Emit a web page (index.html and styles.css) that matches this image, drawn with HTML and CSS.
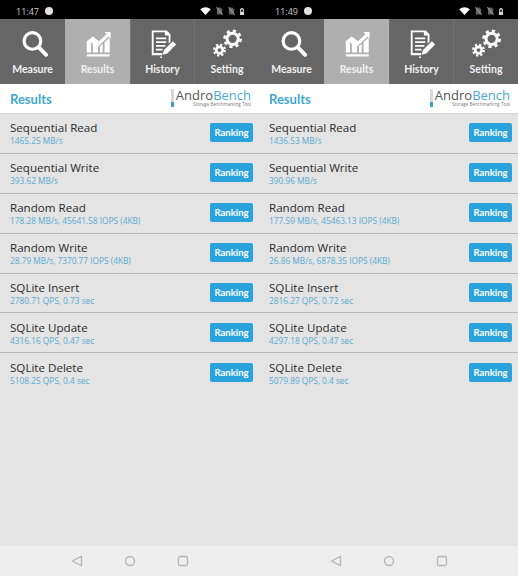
FILE: index.html
```html
<!DOCTYPE html>
<html lang="en">
<head>
<meta charset="utf-8">
<title>AndroBench Results</title>
<link rel="stylesheet" href="styles.css">
</head>
<body>
<svg class="defs" width="0" height="0" aria-hidden="true">
  <defs>
    <symbol id="i-measure" viewBox="0 0 32 32">
      <circle cx="15.400" cy="12.700" r="8.900" fill="none" stroke="#fff" stroke-width="3.400"/>
      <path d="M22.500 19.800L30 27.500" stroke="#fff" stroke-width="4.200" stroke-linecap="round"/>
    </symbol>
    <symbol id="i-results" viewBox="0 0 32 32">
      <path d="M4 13l6.500-5 6.500 5 8-7.500-2-2.200h6.500v6.700l-2-2-12.500 11.500-6.500-5.500-4.500 3.500z" fill="#fff"/>
      <path d="M4 17.500l4.500-3.500v11h-4.500zM10.500 12.800l5.500 4.500v7.700h-5.500zM18 18.500l3-2.700v9.200h-3zM23 14l5.500-5v16h-5.500zM4 27h24.500v2.200h-24.500z" fill="#fff"/>
    </symbol>
    <symbol id="i-history" viewBox="0 0 32 32">
      <path d="M4 1.500h16l4 4v8l-2 2v-8.500h-4v-3.500h-12v22h9v2.500h-11z" fill="#fff"/>
      <path d="M8.500 9h11v2h-11zM8.500 13h11v2h-11zM8.500 17h10v2h-10zM8.500 21h7v2h-7z" fill="#fff"/>
      <path d="M26.500 13l3.500 3.500-9.500 9.500-5 1.500 1.500-5z" fill="#fff"/>
      <circle cx="14" cy="30" r="1" fill="#fff"/>
    </symbol>
    <symbol id="i-setting" viewBox="0 0 32 32">
      <g fill="none" stroke="#fff">
        <circle cx="22" cy="10.500" r="6" stroke-width="3.200"/>
        <circle cx="22" cy="10.500" r="8.600" stroke-width="2.800" stroke-dasharray="3.400 3.350"/>
        <circle cx="8" cy="22.500" r="3.500" stroke-width="2.800"/>
        <circle cx="8" cy="22.500" r="5.800" stroke-width="2.200" stroke-dasharray="2.400 2.150"/>
      </g>
    </symbol>
    <symbol id="i-wifi" viewBox="0 0 12 9">
      <path d="M0 2.500Q6-2 12 2.500L6 9z" fill="#fff"/>
    </symbol>
    <symbol id="i-sim" viewBox="0 0 8 9">
      <path d="M1 .5h4l2 2v6h-6z" fill="#666"/>
      <path d="M0 0l8 9" stroke="#bbb" stroke-width=".8"/>
    </symbol>
    <symbol id="i-batt" viewBox="0 0 5 9">
      <path d="M1.500 0h2v1h1.500v8h-5v-8h1.500z" fill="#ddd"/>
      <path d="M1 2h3v3h-3z" fill="#333"/>
    </symbol>
  </defs>
</svg>

<main class="screens">
  <section class="phone">
    <header class="status">
      <span class="clock">11:47</span>
      <span class="dot"></span>
      <span class="status-icons">
        <svg class="wifi"><use href="#i-wifi"/></svg>
        <svg class="sim"><use href="#i-sim"/></svg>
        <svg class="sim"><use href="#i-sim"/></svg>
        <svg class="batt"><use href="#i-batt"/></svg>
      </span>
    </header>
    <nav class="tabs">
      <a class="tab"><svg class="tab-icon"><use href="#i-measure"/></svg><span>Measure</span></a>
      <a class="tab active"><svg class="tab-icon"><use href="#i-results"/></svg><span>Results</span></a>
      <a class="tab"><svg class="tab-icon"><use href="#i-history"/></svg><span>History</span></a>
      <a class="tab"><svg class="tab-icon"><use href="#i-setting"/></svg><span>Setting</span></a>
    </nav>
    <div class="title-bar">
      <h1>Results</h1>
      <div class="logo">
        <span class="logo-bar"></span>
        <div class="logo-text">
          <div class="logo-name">Andro<b>Bench</b></div>
          <div class="logo-sub">Storage Benchmarking Tool</div>
        </div>
      </div>
    </div>
    <ul class="results">
      <li class="row"><div class="info"><h2>Sequential Read</h2><p>1465.25 MB/s</p></div><button class="rank">Ranking</button></li>
      <li class="row"><div class="info"><h2>Sequential Write</h2><p>393.62 MB/s</p></div><button class="rank">Ranking</button></li>
      <li class="row"><div class="info"><h2>Random Read</h2><p>178.28 MB/s, 45641.58 IOPS (4KB)</p></div><button class="rank">Ranking</button></li>
      <li class="row"><div class="info"><h2>Random Write</h2><p>28.79 MB/s, 7370.77 IOPS (4KB)</p></div><button class="rank">Ranking</button></li>
      <li class="row"><div class="info"><h2>SQLite Insert</h2><p>2780.71 QPS, 0.73 sec</p></div><button class="rank">Ranking</button></li>
      <li class="row"><div class="info"><h2>SQLite Update</h2><p>4316.16 QPS, 0.47 sec</p></div><button class="rank">Ranking</button></li>
      <li class="row"><div class="info"><h2>SQLite Delete</h2><p>5108.25 QPS, 0.4 sec</p></div><button class="rank">Ranking</button></li>
    </ul>
    <footer class="softkeys">
      <svg class="key" viewBox="0 0 12 12"><path d="M10.500 1.200v9.600L1.500 6z" fill="none" stroke="#b5b5b5" stroke-width="1.300" stroke-linejoin="round"/></svg>
      <svg class="key" viewBox="0 0 12 12"><circle cx="6" cy="6" r="4.500" fill="none" stroke="#b5b5b5" stroke-width="1.300"/></svg>
      <svg class="key" viewBox="0 0 12 12"><rect x="1.500" y="1.500" width="9" height="9" rx="1.500" fill="none" stroke="#b5b5b5" stroke-width="1.300"/></svg>
    </footer>
  </section>

  <section class="phone">
    <header class="status">
      <span class="clock">11:49</span>
      <span class="dot"></span>
      <span class="status-icons">
        <svg class="wifi"><use href="#i-wifi"/></svg>
        <svg class="sim"><use href="#i-sim"/></svg>
        <svg class="sim"><use href="#i-sim"/></svg>
        <svg class="batt"><use href="#i-batt"/></svg>
      </span>
    </header>
    <nav class="tabs">
      <a class="tab"><svg class="tab-icon"><use href="#i-measure"/></svg><span>Measure</span></a>
      <a class="tab active"><svg class="tab-icon"><use href="#i-results"/></svg><span>Results</span></a>
      <a class="tab"><svg class="tab-icon"><use href="#i-history"/></svg><span>History</span></a>
      <a class="tab"><svg class="tab-icon"><use href="#i-setting"/></svg><span>Setting</span></a>
    </nav>
    <div class="title-bar">
      <h1>Results</h1>
      <div class="logo">
        <span class="logo-bar"></span>
        <div class="logo-text">
          <div class="logo-name">Andro<b>Bench</b></div>
          <div class="logo-sub">Storage Benchmarking Tool</div>
        </div>
      </div>
    </div>
    <ul class="results">
      <li class="row"><div class="info"><h2>Sequential Read</h2><p>1436.53 MB/s</p></div><button class="rank">Ranking</button></li>
      <li class="row"><div class="info"><h2>Sequential Write</h2><p>390.96 MB/s</p></div><button class="rank">Ranking</button></li>
      <li class="row"><div class="info"><h2>Random Read</h2><p>177.59 MB/s, 45463.13 IOPS (4KB)</p></div><button class="rank">Ranking</button></li>
      <li class="row"><div class="info"><h2>Random Write</h2><p>26.86 MB/s, 6878.35 IOPS (4KB)</p></div><button class="rank">Ranking</button></li>
      <li class="row"><div class="info"><h2>SQLite Insert</h2><p>2816.27 QPS, 0.72 sec</p></div><button class="rank">Ranking</button></li>
      <li class="row"><div class="info"><h2>SQLite Update</h2><p>4297.18 QPS, 0.47 sec</p></div><button class="rank">Ranking</button></li>
      <li class="row"><div class="info"><h2>SQLite Delete</h2><p>5079.89 QPS, 0.4 sec</p></div><button class="rank">Ranking</button></li>
    </ul>
    <footer class="softkeys">
      <svg class="key" viewBox="0 0 12 12"><path d="M10.500 1.200v9.600L1.500 6z" fill="none" stroke="#b5b5b5" stroke-width="1.300" stroke-linejoin="round"/></svg>
      <svg class="key" viewBox="0 0 12 12"><circle cx="6" cy="6" r="4.500" fill="none" stroke="#b5b5b5" stroke-width="1.300"/></svg>
      <svg class="key" viewBox="0 0 12 12"><rect x="1.500" y="1.500" width="9" height="9" rx="1.500" fill="none" stroke="#b5b5b5" stroke-width="1.300"/></svg>
    </footer>
  </section>
</main>
</body>
</html>
```
FILE: styles.css
```css
* { box-sizing: border-box; }
html, body { margin: 0; padding: 0; }
body { width: 518px; height: 576px; overflow: hidden; font-family: "Open Sans", "Noto Sans", sans-serif; background: #e4e4e4; }
.defs { display: block; height: 0; }
.screens { display: grid; grid-template-columns: 259px 259px; height: 576px; }
.phone { display: flex; flex-direction: column; height: 576px; min-width: 0; }

.status { height: 19px; background: #000; display: flex; align-items: center; padding: 3px 15px 0 16px; color: #c9c9c9; }
.clock { font-size: 9px; }
.dot { width: 8px; height: 8px; border-radius: 50%; background: #e2e2e2; margin-left: 6px; }
.status-icons { margin-left: auto; display: flex; align-items: center; gap: 4px; }
.wifi { width: 11px; height: 8px; }
.sim { width: 7px; height: 8px; margin-left: 1px; }
.batt { width: 4px; height: 7px; margin-left: 1px; }

.tabs { height: 65px; display: grid; grid-template-columns: 65px 65px 64px 65px; background: #666; }
.tab { display: flex; flex-direction: column; align-items: center; color: #fff; padding-top: 10px; border-left: 1px solid #727272; }
.tab:first-child { border-left: 0; }
.tab.active { background: #afafaf; border-left: 0; }
.tab-icon { width: 30px; height: 30px; display: block; }
.tab span { font-family: "Lato", sans-serif; font-size: 10.500px; font-weight: 700; line-height: 14px; margin-top: 3px; color: #f2f2f2; }

.title-bar { height: 29px; background: #fff; display: flex; align-items: center; justify-content: space-between; padding: 0 8px 0 10px; }
h1 { margin: 0; font-family: "Lato", sans-serif; font-size: 13px; font-weight: 700; color: #3fa7d0; line-height: 16px; }
.logo { display: flex; align-items: stretch; height: 18px; margin-top: -2px; }
.logo-bar { width: 3px; margin-right: 2px; background: linear-gradient(#d8d8d8 0, #d8d8d8 70%, #38a0cc 70%); }
.logo-text { display: flex; flex-direction: column; align-items: flex-end; }
.logo-name { font-size: 13px; line-height: 13px; color: #555; }
.logo-name b { font-weight: 400; color: #4aa9d2; }
.logo-sub { font-size: 4.500px; line-height: 5px; color: #777; }

.results { list-style: none; margin: 0; padding: 0; flex: 1; background: #e4e4e4; }
.row { height: 39.900px; display: flex; align-items: center; justify-content: space-between; padding: 0 6px 0 10px; border-top: 1px solid #b9b9b9; }
.row:first-child { border-top: 1px solid #d4d4d4; }
h2 { margin: 0; font-size: 11.600px; font-weight: 400; line-height: 15px; color: #2b2b2b; }
p { margin: 0; font-size: 8.300px; line-height: 11px; color: #58aad2; }
.rank { width: 43px; height: 19px; margin-top: -1px; border: 0; border-radius: 2px; padding: 0; background: #2aa3dc; color: #fff; font: 700 9.500px "Lato", sans-serif; }

.softkeys { height: 30px; background: #eeeeee; display: grid; grid-template-columns: repeat(3, 53px); justify-content: center; align-items: center; justify-items: center; }
.key { width: 12px; height: 12px; }
```
